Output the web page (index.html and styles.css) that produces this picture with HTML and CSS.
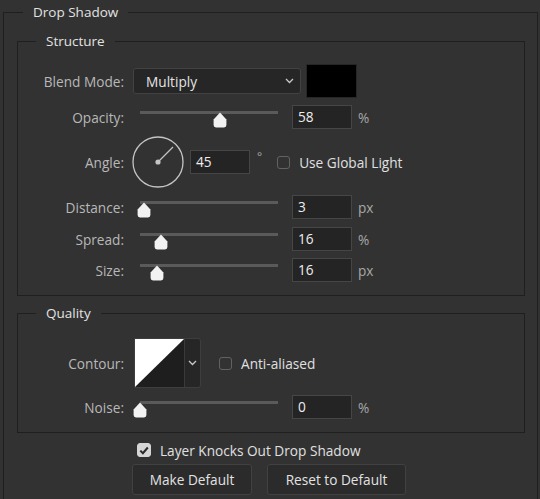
FILE: index.html
```html
<!DOCTYPE html>
<html>
<head>
<meta charset="utf-8">
<link rel="stylesheet" href="styles.css">
</head>
<body>
<fieldset class="group outer">
  <legend class="title title-outer">Drop Shadow</legend>

  <fieldset class="group inner structure">
    <legend class="title title-inner">Structure</legend>

    <div class="row row-blend">
      <span class="label">Blend Mode:</span>
      <div class="select">
        <span class="select-text">Multiply</span>
        <svg class="chev" width="9" height="6" viewBox="0 0 9 6"><path d="M1 1 L4.5 4.5 L8 1" fill="none" stroke="#c8c8c8" stroke-width="1.3"/></svg>
      </div>
      <div class="swatch"></div>
    </div>

    <div class="row row-slider">
      <span class="label">Opacity:</span>
      <div class="slider"><div class="track"></div><svg class="thumb" style="left:58%" width="14" height="16" viewBox="0 0 14 16"><path d="M7 0.6 L13.4 7.5 V13 Q13.4 15.4 11 15.4 H3 Q0.6 15.4 0.6 13 V7.5 Z" fill="#f2f2f2"/></svg></div>
      <div class="field">58</div>
      <span class="unit">%</span>
    </div>

    <div class="row row-angle">
      <span class="label">Angle:</span>
      <svg class="dial" width="52" height="52" viewBox="0 0 52 52">
        <circle cx="26" cy="26" r="25" fill="none" stroke="#c4c4c4" stroke-width="1.3"/>
        <line x1="26" y1="26" x2="41" y2="11" stroke="#c4c4c4" stroke-width="1.2"/>
        <circle cx="26" cy="26" r="2.6" fill="#c4c4c4"/>
      </svg>
      <div class="field field-angle">45</div>
      <span class="degree">°</span>
      <span class="check check-global"></span>
      <span class="check-label">Use Global Light</span>
    </div>

    <div class="row row-slider">
      <span class="label">Distance:</span>
      <div class="slider"><div class="track"></div><svg class="thumb" style="left:3%" width="14" height="16" viewBox="0 0 14 16"><path d="M7 0.6 L13.4 7.5 V13 Q13.4 15.4 11 15.4 H3 Q0.6 15.4 0.6 13 V7.5 Z" fill="#f2f2f2"/></svg></div>
      <div class="field">3</div>
      <span class="unit">px</span>
    </div>

    <div class="row row-slider row-spread">
      <span class="label">Spread:</span>
      <div class="slider"><div class="track"></div><svg class="thumb" style="left:15.2%" width="14" height="16" viewBox="0 0 14 16"><path d="M7 0.6 L13.4 7.5 V13 Q13.4 15.4 11 15.4 H3 Q0.6 15.4 0.6 13 V7.5 Z" fill="#f2f2f2"/></svg></div>
      <div class="field">16</div>
      <span class="unit">%</span>
    </div>

    <div class="row row-slider">
      <span class="label">Size:</span>
      <div class="slider"><div class="track"></div><svg class="thumb" style="left:12%" width="14" height="16" viewBox="0 0 14 16"><path d="M7 0.6 L13.4 7.5 V13 Q13.4 15.4 11 15.4 H3 Q0.6 15.4 0.6 13 V7.5 Z" fill="#f2f2f2"/></svg></div>
      <div class="field">16</div>
      <span class="unit">px</span>
    </div>
  </fieldset>

  <fieldset class="group inner quality">
    <legend class="title title-inner">Quality</legend>

    <div class="row row-contour">
      <span class="label">Contour:</span>
      <div class="contour">
        <svg class="contour-swatch" width="49" height="48" viewBox="0 0 49 48">
          <rect width="49" height="48" fill="#1e1e1e"/>
          <polygon points="0,0 49,0 0,48" fill="#ffffff"/>
        </svg>
        <div class="contour-btn">
          <svg width="9" height="6" viewBox="0 0 9 6"><path d="M1 1 L4.5 4.5 L8 1" fill="none" stroke="#c8c8c8" stroke-width="1.3"/></svg>
        </div>
      </div>
      <span class="check check-anti"></span>
      <span class="check-label">Anti-aliased</span>
    </div>

    <div class="row row-slider">
      <span class="label">Noise:</span>
      <div class="slider"><div class="track"></div><svg class="thumb" style="left:0%" width="14" height="16" viewBox="0 0 14 16"><path d="M7 0.6 L13.4 7.5 V13 Q13.4 15.4 11 15.4 H3 Q0.6 15.4 0.6 13 V7.5 Z" fill="#f2f2f2"/></svg></div>
      <div class="field">0</div>
      <span class="unit">%</span>
    </div>
  </fieldset>

  <div class="knock-row">
    <span class="check checked">
      <svg width="10" height="9" viewBox="0 0 10 9"><path d="M1.3 4.6 L3.9 7.2 L8.8 1.5" fill="none" stroke="#2a2a2a" stroke-width="2"/></svg>
    </span>
    <span class="check-label">Layer Knocks Out Drop Shadow</span>
  </div>

  <div class="buttons">
    <div class="btn btn-make">Make Default</div>
    <div class="btn btn-reset">Reset to Default</div>
  </div>
</fieldset>
</body>
</html>
```

FILE: styles.css
```css
html, body {
  margin: 0;
  padding: 0;
  background: #323232;
  overflow: hidden;
  height: 499px;
}

body {
  font-family: "Open Sans", "Liberation Sans", sans-serif;
  font-size: 13.65px;
  color: #b9b9b9;
}

.group {
  border: 1px solid #1f1f1f;
  min-inline-size: 0;
  box-sizing: border-box;
}

.outer {
  margin: 4px 0 0 3px;
  width: 535px;
  height: 560px;
  padding: 13px 12px 0 13px;
}

.inner {
  margin: 0;
  width: 508px;
}

.structure {
  padding: 15px 0 13px 0;
}

.quality {
  margin-top: 9px;
  padding: 17px 0 13px 0;
}

.title {
  font-size: 13.5px;
  line-height: 16px;
  color: #e2e2e2;
  padding: 0 10px;
}

.title-outer {
  margin-left: 6px;
}

.title-inner {
  margin-left: 18px;
}

.row {
  display: flex;
  align-items: center;
  height: 24px;
  margin-top: 7px;
}

.row:first-of-type {
  margin-top: 0;
}

.row-blend {
  height: 34px;
}

.row-angle {
  height: 52px;
}

.row-spread {
  margin-top: 8px;
}

.row-contour {
  height: 50px;
}

.label {
  width: 106px;
  text-align: right;
  flex: none;
  color: #b8b8b8;
}

.select {
  margin-left: 9px;
  width: 168px;
  height: 26px;
  box-sizing: border-box;
  background: #262626;
  border: 1px solid #424242;
  border-radius: 3px;
  display: flex;
  align-items: center;
  justify-content: space-between;
  padding: 0 6px 0 12px;
  color: #e4e4e4;
}

.swatch {
  margin-left: 5px;
  width: 51px;
  height: 34px;
  box-sizing: border-box;
  background: #000;
  border: 1px solid #262626;
}

.slider {
  position: relative;
  margin-left: 16px;
  width: 138px;
  height: 24px;
  align-self: flex-start;
}

.track {
  margin-top: 6px;
  height: 3px;
  background: #5a5a5a;
}

.thumb {
  position: absolute;
  top: 7px;
  margin-left: -7px;
}

.field {
  margin-left: 14px;
  width: 60px;
  height: 24px;
  box-sizing: border-box;
  background: #242424;
  border: 1px solid #464646;
  padding-left: 5px;
  line-height: 22px;
  color: #eeeeee;
}

.unit {
  margin-left: 6px;
  color: #a8a8a8;
}

.dial {
  margin-left: 8px;
  flex: none;
}

.field-angle {
  margin-left: 6px;
}

.degree {
  margin-left: 7px;
  align-self: flex-start;
  margin-top: 12px;
  font-size: 12px;
  color: #a8a8a8;
}

.check {
  width: 13px;
  height: 13px;
  box-sizing: border-box;
  border: 1px solid #626262;
  border-radius: 3px;
  flex: none;
  display: flex;
  align-items: center;
  justify-content: center;
}

.check-global {
  margin-left: 15px;
}

.check-anti {
  margin-left: 18px;
}

.check-label {
  margin-left: 9px;
  color: #e0e0e0;
  white-space: nowrap;
}

.contour {
  margin-left: 10px;
  display: flex;
  width: 67px;
  height: 50px;
  box-sizing: border-box;
  border: 1px solid #3e3e3e;
  border-radius: 0 3px 3px 0;
  background: #262626;
}

.contour-swatch {
  display: block;
}

.contour-btn {
  flex: 1;
  display: flex;
  align-items: center;
  justify-content: center;
  border-left: 1px solid #3a3a3a;
}

.knock-row {
  display: flex;
  align-items: center;
  height: 14px;
  margin-top: 10px;
  margin-left: 120px;
}

.checked {
  width: 14px;
  height: 14px;
  background: #d6d6d6;
  border-color: #d6d6d6;
}

.buttons {
  display: flex;
  gap: 15px;
  margin-top: 7px;
  margin-left: 115px;
}

.btn {
  height: 31px;
  box-sizing: border-box;
  background: #2b2b2b;
  border: 1px solid #414141;
  border-radius: 3px;
  display: flex;
  align-items: center;
  justify-content: center;
  color: #e2e2e2;
  font-size: 13.65px;
}

.btn-make {
  width: 120px;
}

.btn-reset {
  width: 139px;
}
```
